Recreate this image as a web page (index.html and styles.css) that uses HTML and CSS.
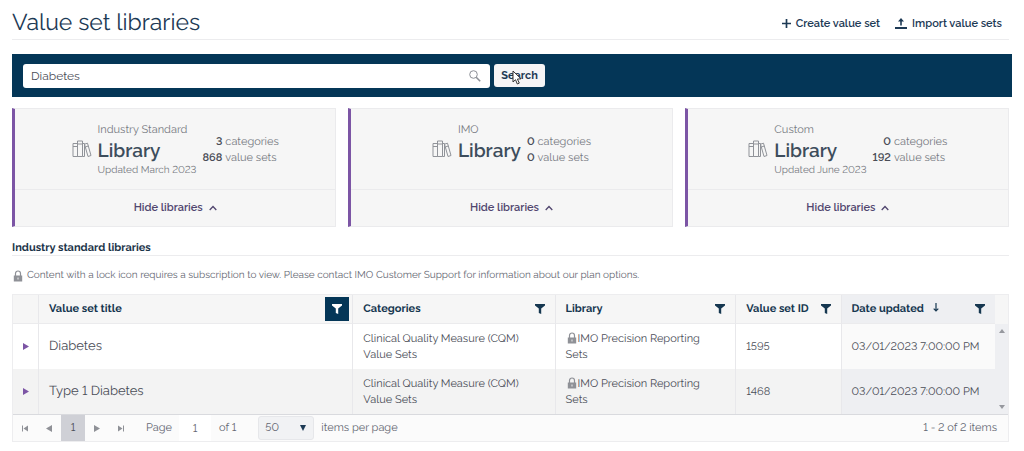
FILE: index.html
```html
<!DOCTYPE html>
<html lang="en">
<head>
<meta charset="utf-8">
<title>Value set libraries</title>
<meta name="viewport" content="width=device-width, initial-scale=1">
<link rel="stylesheet" href="styles.css">
</head>
<body>
<svg class="sprite" aria-hidden="true">
  <symbol id="books" viewBox="0 0 20 18"><g fill="none" stroke="currentColor" stroke-width="1"><path d="M1 3.500h4.500v13H1zM5.500 1h5v15.500h-5zM1 6.500h4.500M5.500 4h5M10.500 3.500h2v13h-2M12.500 4.200l3-1 3.500 12.300-3 1zM13.300 7l3-1"/></g></symbol>
  <symbol id="lock" viewBox="0 0 10 12"><path d="M2.500 6V3.500a2.500 2.500 0 0 1 5 0V6" fill="none" stroke="currentColor" stroke-width="1.200"/><path d="M.8 5.500h8.400V11.500H.8z" fill="currentColor"/><path d="M5 7.500v2" stroke="#eee" stroke-width="1"/></symbol>
  <symbol id="funnel" viewBox="0 0 10 10"><path d="M0 0h10v1.500L6.200 4.500V10L3.800 9V4.500L0 1.500z" fill="currentColor"/></symbol>
  <symbol id="chevron" viewBox="0 0 8 6"><path d="M.7 5L4 1.500 7.300 5" fill="none" stroke="currentColor" stroke-width="1.300"/></symbol>
  <symbol id="tri" viewBox="0 0 6 7"><path d="M0 0l6 3.500L0 7z" fill="currentColor"/></symbol>
  <symbol id="tri-end" viewBox="0 0 6 6"><path d="M0 0l4.500 3L0 6zM5 0h1v6H5z" fill="currentColor"/></symbol>
</svg>
<main class="page">
  <header class="page-head inset">
    <h1 class="title">Value set libraries</h1>
    <nav class="actions">
      <button type="button" class="action"><svg class="plus" viewBox="0 0 8 8"><path d="M4 0v8M0 4h8" stroke="currentColor" stroke-width="1.500"/></svg>Create value set</button>
      <button type="button" class="action"><svg class="upload" viewBox="0 0 12 11"><path d="M0 9h12v2H0zM6 0l3 3.500H6.800V7.500H5.200V3.500H3z" fill="currentColor"/></svg>Import value sets</button>
    </nav>
  </header>

  <form class="search-bar">
    <div class="search-box">
      <input class="search-input" type="text" value="Diabetes" aria-label="Search value sets">
      <svg class="search-icon" viewBox="0 0 12 12"><circle cx="4.500" cy="4.500" r="3.800" fill="none" stroke="currentColor"/><path d="M7.200 7.200l4 4" stroke="currentColor" stroke-width="1.600"/></svg>
    </div>
    <button type="button" class="search-button">Search<svg class="cursor" viewBox="0 0 10 15"><path d="M1 1v11l2.500-2.300L5.300 14l2-.9-1.900-4L9 8.800z" fill="#fff" stroke="#333" stroke-width="1"/></svg></button>
  </form>

  <section class="cards inset">
    <article class="card">
      <div class="card-body">
        <svg class="books"><use href="#books"/></svg>
        <div><p class="kind">Industry Standard</p><h2 class="library">Library</h2><p class="updated">Updated March 2023</p></div>
        <dl class="stats"><dt>3</dt><dd>categories</dd><dt>868</dt><dd>value sets</dd></dl>
      </div>
      <button type="button" class="toggle">Hide libraries<svg class="chevron"><use href="#chevron"/></svg></button>
    </article>
    <article class="card">
      <div class="card-body">
        <svg class="books"><use href="#books"/></svg>
        <div><p class="kind">IMO</p><h2 class="library">Library</h2></div>
        <dl class="stats"><dt>0</dt><dd>categories</dd><dt>0</dt><dd>value sets</dd></dl>
      </div>
      <button type="button" class="toggle">Hide libraries<svg class="chevron"><use href="#chevron"/></svg></button>
    </article>
    <article class="card">
      <div class="card-body">
        <svg class="books"><use href="#books"/></svg>
        <div><p class="kind">Custom</p><h2 class="library">Library</h2><p class="updated">Updated June 2023</p></div>
        <dl class="stats"><dt>0</dt><dd>categories</dd><dt>192</dt><dd>value sets</dd></dl>
      </div>
      <button type="button" class="toggle">Hide libraries<svg class="chevron"><use href="#chevron"/></svg></button>
    </article>
  </section>

  <h2 class="section-title inset">Industry standard libraries</h2>
  <p class="notice"><svg class="lock"><use href="#lock"/></svg>Content with a lock icon requires a subscription to view. Please contact IMO Customer Support for information about our plan options.</p>

  <section class="grid inset">
    <div class="grid-main">
      <table class="table">
        <colgroup><col class="c-toggle"><col class="c-title"><col class="c-cat"><col class="c-lib"><col class="c-id"><col class="c-date"></colgroup>
        <thead>
          <tr>
            <th aria-label="Expand"></th>
            <th><div class="th">Value set title<button type="button" class="filter active" aria-label="Filter title"><svg><use href="#funnel"/></svg></button></div></th>
            <th><div class="th">Categories<button type="button" class="filter" aria-label="Filter categories"><svg><use href="#funnel"/></svg></button></div></th>
            <th><div class="th">Library<button type="button" class="filter" aria-label="Filter library"><svg><use href="#funnel"/></svg></button></div></th>
            <th><div class="th">Value set ID<button type="button" class="filter" aria-label="Filter ID"><svg><use href="#funnel"/></svg></button></div></th>
            <th class="sorted"><div class="th"><span>Date updated<svg class="sort" viewBox="0 0 6 9"><path d="M3 0v8M.7 5.700L3 8l2.300-2.300" fill="none" stroke="currentColor" stroke-width="1.200"/></svg></span><button type="button" class="filter" aria-label="Filter date"><svg><use href="#funnel"/></svg></button></div></th>
          </tr>
        </thead>
        <tbody>
          <tr>
            <td class="expand"><button type="button" aria-label="Expand Diabetes"><svg><use href="#tri"/></svg></button></td>
            <td class="name">Diabetes</td>
            <td>Clinical Quality Measure (CQM) Value Sets</td>
            <td class="source"><svg class="lock"><use href="#lock"/></svg>IMO Precision Reporting Sets</td>
            <td>1595</td>
            <td class="sorted">03/01/2023 7:00:00 PM</td>
          </tr>
          <tr>
            <td class="expand"><button type="button" aria-label="Expand Type 1 Diabetes"><svg><use href="#tri"/></svg></button></td>
            <td class="name">Type 1 Diabetes</td>
            <td>Clinical Quality Measure (CQM) Value Sets</td>
            <td class="source"><svg class="lock"><use href="#lock"/></svg>IMO Precision Reporting Sets</td>
            <td>1468</td>
            <td class="sorted">03/01/2023 7:00:00 PM</td>
          </tr>
        </tbody>
      </table>
      <div class="scroll"><svg viewBox="0 0 6 4"><path d="M0 4l3-4 3 4z" fill="currentColor"/></svg><svg viewBox="0 0 6 4"><path d="M0 0l3 4 3-4z" fill="currentColor"/></svg></div>
    </div>
    <footer class="pager">
      <button type="button" class="page-button" aria-label="First page"><svg class="flip"><use href="#tri-end"/></svg></button>
      <button type="button" class="page-button" aria-label="Previous page"><svg class="flip"><use href="#tri"/></svg></button>
      <button type="button" class="page-button current">1</button>
      <button type="button" class="page-button" aria-label="Next page"><svg><use href="#tri"/></svg></button>
      <button type="button" class="page-button" aria-label="Last page"><svg><use href="#tri-end"/></svg></button>
      <label class="page-label" for="page-no">Page</label>
      <input class="page-no" id="page-no" type="text" value="1">
      <span class="of">of 1</span>
      <span class="size"><select id="size"><option>50</option></select><svg viewBox="0 0 6 6"><path d="M0 0h6L3 6z" fill="currentColor"/></svg></span>
      <label for="size">items per page</label>
      <span class="total">1 - 2 of 2 items</span>
    </footer>
  </section>
</main>
</body>
</html>
```

FILE: styles.css
```css
* { box-sizing: border-box; }
body, h1, h2, p, dl, dd { margin: 0; }
body {
  background: #fff;
  color: #4a4d57;
  font: 11px/16px Raleway, Lato, "Open Sans", sans-serif;
  font-variant-numeric: lining-nums;
  text-rendering: geometricPrecision;
}
button, input, select { font: inherit; font-variant-numeric: inherit; color: inherit; }
button { border: 0; padding: 0; background: none; }
.sprite { display: none; }
.page { padding: 0 12px; }
.inset { margin-right: 3px; }

.page-head {
  display: flex;
  align-items: center;
  justify-content: space-between;
  height: 40px;
  padding-top: 6px;
  border-bottom: 1px solid #ececee;
  color: #1d3a55;
}
.title { font-size: 23px; line-height: 32px; font-weight: 400; }
.actions { display: flex; gap: 15px; padding: 2px 7px 0 0; }
.action { display: flex; align-items: center; gap: 5px; font-weight: 600; }
.plus { width: 9px; height: 9px; }
.upload { width: 12px; height: 11px; }

.search-bar {
  display: flex;
  align-items: center;
  gap: 4px;
  height: 43px;
  margin: 14px 0 11px;
  padding-left: 11px;
  background: #043657;
}
.search-box {
  display: flex;
  align-items: center;
  flex: 0 1 467px;
  height: 24px;
  padding: 0 9px 0 8px;
  background: #fff;
  border-radius: 3px;
}
.search-input { flex: 1; min-width: 0; border: 0; padding: 0; background: none; outline: 0; font-size: 12px; }
.search-icon { width: 12px; height: 12px; color: #8c8f96; }
.search-button {
  position: relative;
  width: 51px;
  height: 23px;
  background: #f5f5f7;
  border-radius: 3px;
  color: #1d3a55;
  font-weight: 700;
}
.cursor { position: absolute; left: 18px; top: 6px; width: 10px; height: 15px; }

.cards { display: grid; grid-template-columns: repeat(3, 1fr); gap: 12px; }
.card { background: #f6f6f6; border: 1px solid #ebebed; border-left: 3px solid #7c55a5; }
.card-body {
  display: flex;
  justify-content: center;
  gap: 6px;
  height: 81px;
  padding-top: 13px;
  border-bottom: 1px solid #ebebed;
  color: #777a82;
}
.books { width: 20px; height: 18px; margin-top: 18px; color: #909399; }
.library { font-size: 19px; line-height: 27px; font-weight: 600; color: #3d4d5c; }
.updated { font-size: 10px; line-height: 12px; }
.stats {
  display: grid;
  grid-template-columns: auto auto;
  column-gap: 3px;
  align-content: start;
  padding-top: 12px;
}
.stats dt { text-align: right; font-weight: 600; color: #4a4d57; }
.toggle {
  display: flex;
  align-items: center;
  justify-content: center;
  gap: 6px;
  width: 100%;
  height: 36px;
  color: #51466f;
  font-weight: 600;
}
.chevron { width: 8px; height: 6px; }

.section-title {
  padding: 13px 0 0;
  border-bottom: 1px solid #ececee;
  font-size: 11px;
  line-height: 15px;
  font-weight: 700;
  color: #1c3449;
}
.notice { display: flex; align-items: center; gap: 4px; padding: 12px 1px 10px; font-size: 10px; color: #646772; }
.lock { width: 10px; height: 12px; color: #8f9197; }

.grid { border: 1px solid #ededef; }
.grid-main { display: flex; border-bottom: 1px solid #d9dade; }
.table { flex: 1; min-width: 0; table-layout: fixed; border-collapse: separate; border-spacing: 0; }
.c-toggle { width: 25px; }
.c-title { width: 32%; }
.c-cat { width: 20.6%; }
.c-lib { width: 18.4%; }
.c-id { width: 105px; }
.c-date { width: 154px; }
th, td { padding: 0 10px; text-align: left; border-left: 1px solid #e8e8eb; }
th:first-child, td:first-child { border-left: 0; padding: 0; }
th { height: 29px; padding-right: 3px; background: #f6f6f6; border-bottom: 1px solid #ebebed; color: #163750; font-weight: 700; }
td { height: 45px; }
tbody tr:nth-child(2) { background: #f3f3f3; }
th.sorted, tbody tr:nth-child(2) .sorted { background: #eeeff2; }
td.sorted { background: #fafafa; white-space: nowrap; }
.source { padding-right: 24px; }
.name { font-size: 13px; }
.th { display: flex; align-items: center; justify-content: space-between; white-space: nowrap; }
.filter { display: grid; place-items: center; width: 24px; height: 24px; }
.filter svg { width: 10px; height: 10px; }
.filter.active { background: #043657; color: #fff; }
.sort { width: 6px; height: 9px; margin-left: 9px; }
.expand { text-align: center; }
.expand svg { width: 6px; height: 7px; color: #7c55a5; }
td .lock { vertical-align: -2px; margin: 0 1px; }
.scroll {
  display: flex;
  flex-direction: column;
  justify-content: space-between;
  align-items: center;
  width: 13px;
  padding: 5px 0;
  border-top: 29px solid #f6f6f6;
  background: #eeeff2;
  color: #96989e;
}
.scroll svg { width: 6px; height: 4px; }

.pager { display: flex; align-items: center; height: 26px; padding-right: 11px; background: #fbfbfb; color: #646772; white-space: nowrap; }
.page-button { display: grid; place-items: center; width: 24px; height: 26px; color: #8f9197; }
.page-button svg { width: 6px; height: 7px; }
.flip { transform: scaleX(-1); }
.current { background: #cfd0d6; color: #4a4d57; }
.page-label { margin-left: 13px; }
.page-no { width: 32px; height: 26px; margin: 0 8px 0 7px; padding: 0; border: 0; background: #fff; text-align: center; }
.of { margin-right: 22px; }
.size { display: flex; align-items: center; width: 56px; height: 24px; margin-right: 7px; padding: 0 7px 0 6px; background: #f1f2f4; border: 1px solid #e6e7ea; border-radius: 3px; }
.size select { flex: 1; min-width: 0; border: 0; padding: 0; background: none; appearance: none; }
.size svg { width: 6px; height: 6px; color: #1d3a55; }
.total { margin-left: auto; }
```
